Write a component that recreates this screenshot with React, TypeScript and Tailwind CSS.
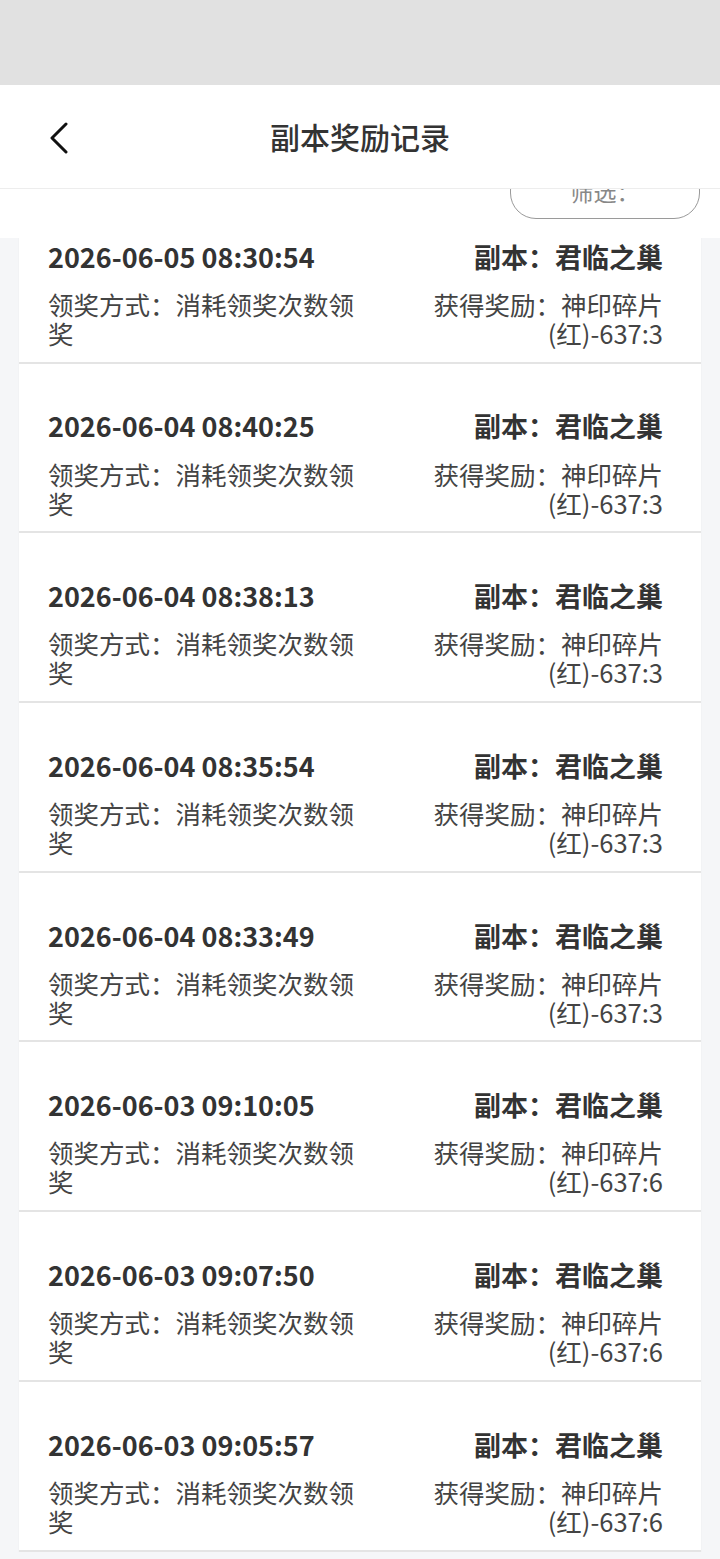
const records = [
  { time: '2026-06-05 08:30:54', reward: '(红)-637:3' },
  { time: '2026-06-04 08:40:25', reward: '(红)-637:3' },
  { time: '2026-06-04 08:38:13', reward: '(红)-637:3' },
  { time: '2026-06-04 08:35:54', reward: '(红)-637:3' },
  { time: '2026-06-04 08:33:49', reward: '(红)-637:3' },
  { time: '2026-06-03 09:10:05', reward: '(红)-637:6' },
  { time: '2026-06-03 09:07:50', reward: '(红)-637:6' },
  { time: '2026-06-03 09:05:57', reward: '(红)-637:6' },
]

function Card({ time, reward }: { time: string; reward: string }) {
  return (
    <div className="bg-white h-[169.7px] pt-[45px] pl-[29px] pr-[38px] border-b-2 border-[#e4e4e4] shadow-[0_1px_2px_rgba(0,0,0,0.04)]">
      <div className="flex justify-between items-center h-[36px] text-[27px] font-bold text-[#333]">
        <span>{time}</span>
        <span>副本：君临之巢</span>
      </div>
      <div className="flex justify-between mt-[14px] text-[25.5px] leading-[29px] text-[#444]">
        <div className="w-[320px]">领奖方式：消耗领奖次数领奖</div>
        <div className="w-[290px] text-right">获得奖励：神印碎片{reward}</div>
      </div>
    </div>
  )
}

export default function App() {
  return (
    <div className="w-[720px] h-[1559px] overflow-hidden bg-[#f5f6f8] font-['Noto_Sans_CJK_SC','Noto_Sans',sans-serif]">
      <div className="h-[85px] bg-[#e1e1e1]" />
      <div className="relative z-10 h-[104px] bg-white border-b border-[#ededed] flex items-center justify-center">
        <svg className="absolute left-[48px] top-[37px]" width="22" height="32" viewBox="0 0 22 32" fill="none">
          <path d="M18 2 L4 16 L18 30" stroke="#111" strokeWidth="3" strokeLinecap="round" strokeLinejoin="round" />
        </svg>
        <span className="text-[30px] text-[#333] font-medium">副本奖励记录</span>
      </div>
      <div className="h-[49px] bg-white flex justify-end pr-[20px]">
        <div className="-mt-[25px] w-[190px] h-[55px] rounded-[26px] border-[1.5px] border-[#9a9a9a] flex items-center justify-center text-[23px] text-[#888]">
          筛选：
        </div>
      </div>
      <div className="overflow-hidden px-[19px]">
        <div className="-mt-[44px]">
          {records.map((r, i) => (
            <Card key={i} time={r.time} reward={r.reward} />
          ))}
        </div>
      </div>
    </div>
  )
}
